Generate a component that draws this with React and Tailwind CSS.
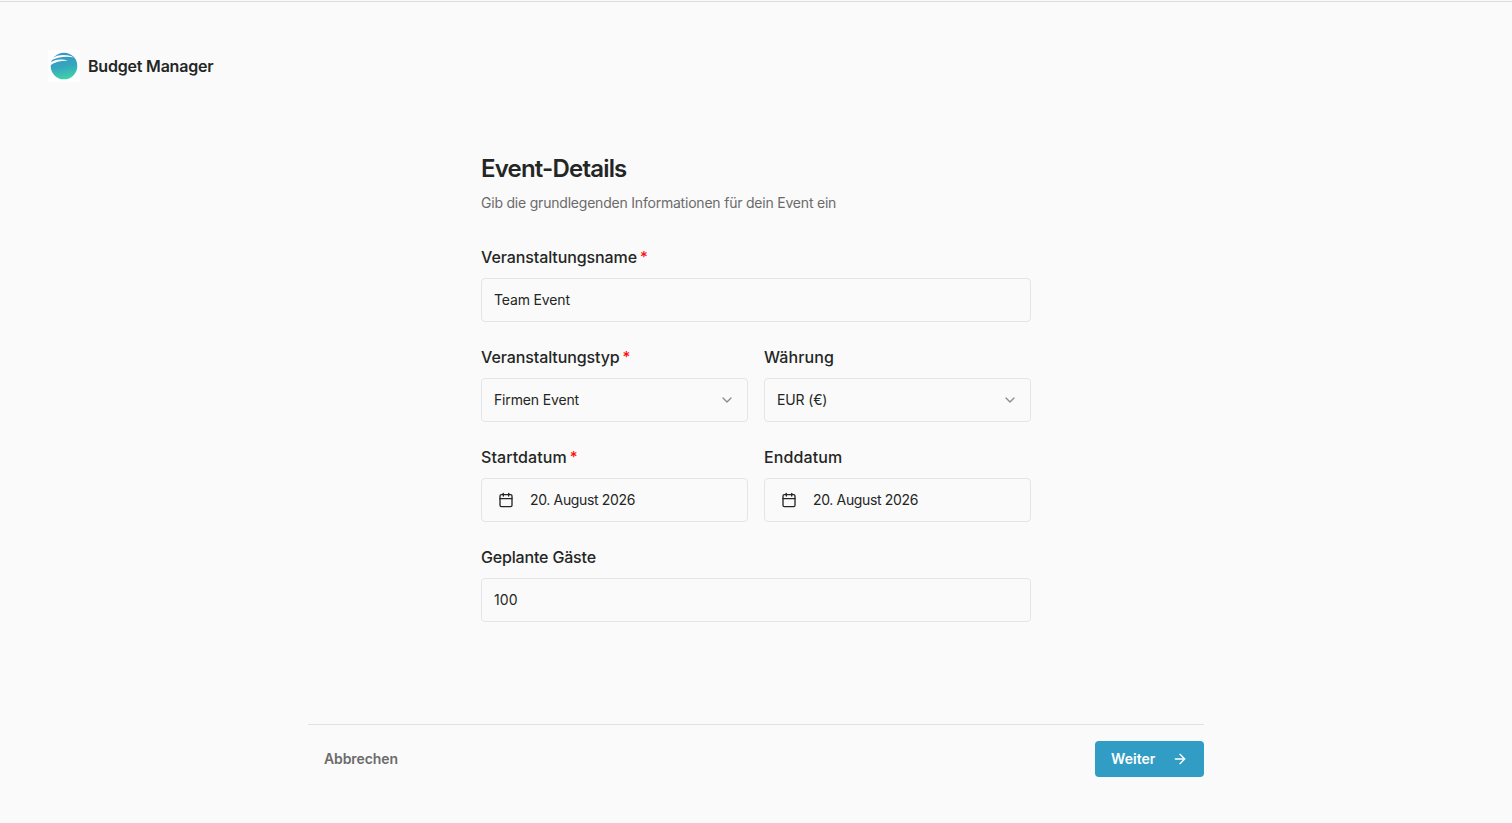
import React from 'react';
import { ArrowRight, Calendar, ChevronDown } from 'lucide-react';

function Logo() {
    return (
        <div className="flex h-8 w-8 items-center justify-center bg-white">
            <svg width="32" height="32" viewBox="0 0 32 32" fill="none">
                <defs>
                    <linearGradient id="globe" x1="13" y1="3" x2="18" y2="30" gradientUnits="userSpaceOnUse">
                        <stop stopColor="#3596c4" />
                        <stop offset="0.5" stopColor="#36a6bd" />
                        <stop offset="1" stopColor="#40d6a8" />
                    </linearGradient>
                </defs>
                <circle cx="16" cy="16" r="13.3" fill="url(#globe)" />
                <path d="M1.5 13.4C6 9.2 13 8.2 20.5 10.9C14.5 10.5 7.5 11.5 2 15.4Z" fill="#fff" />
                <path d="M3.6 8.2C9.5 4.6 18.5 3.5 26 7.4C19 6 10 6.3 2.6 10.6Z" fill="#fff" />
            </svg>
        </div>
    );
}

function Field({ label, required, tracking = 'tracking-[-0.1px]', children }) {
    return (
        <div className="flex flex-1 flex-col">
            <label className={`flex h-6 items-center text-base font-medium whitespace-nowrap ${tracking}`}>
                {label}
                {required && <span className="ml-[3px] text-[15px] text-[#fb0d0d]">*</span>}
            </label>
            <div className="mt-[9px] flex h-11 items-center rounded border border-[#e5e5e5] px-3 text-sm tracking-[-0.15px]">
                {children}
            </div>
        </div>
    );
}

function SelectValue({ children }) {
    return (
        <div className="flex flex-1 items-center justify-between">
            {children}
            <ChevronDown size={16} strokeWidth={2} className="text-[#8c8c8c]" />
        </div>
    );
}

function DateValue({ children }) {
    return (
        <div className="flex items-center gap-4 pl-1">
            <Calendar size={16} strokeWidth={2} />
            <span className="tracking-[-0.35px]">{children}</span>
        </div>
    );
}

export default function App() {
    return (
        <div className="h-[823px] bg-[#fafafa] pt-px font-['Inter',sans-serif] text-[#242625]">
            <div className="flex flex-col border-t border-[#dcdcdc]">
                <header className="flex items-center gap-2 px-12 pt-12">
                    <Logo />
                    <span className="text-base font-semibold tracking-[-0.2px]">Budget Manager</span>
                </header>

                <main className="mx-auto mt-[71px] w-[550px]">
                    <h1 className="text-2xl leading-8 font-semibold tracking-[-0.8px]">Event-Details</h1>
                    <p className="mt-2 text-sm tracking-[-0.21px] text-[#6b6b6b]">
                        Gib die grundlegenden Informationen für dein Event ein
                    </p>

                    <form className="mt-8 flex flex-col gap-[23px]">
                        <Field label="Veranstaltungsname" required>Team Event</Field>
                        <div className="flex gap-4">
                            <Field label="Veranstaltungstyp" required>
                                <SelectValue>Firmen Event</SelectValue>
                            </Field>
                            <Field label="Währung" tracking="tracking-[0.1px]">
                                <SelectValue>EUR (€)</SelectValue>
                            </Field>
                        </div>
                        <div className="flex gap-4">
                            <Field label="Startdatum" required tracking="tracking-[0.08px]">
                                <DateValue>20. August 2026</DateValue>
                            </Field>
                            <Field label="Enddatum" tracking="tracking-[0.12px]">
                                <DateValue>20. August 2026</DateValue>
                            </Field>
                        </div>
                        <Field label="Geplante Gäste" tracking="tracking-[-0.17px]">
                            <span className="tracking-[0.1px]">100</span>
                        </Field>
                    </form>
                </main>

                <footer className="mx-auto mt-[102px] flex w-full max-w-4xl items-center justify-between border-t border-[#e2e2e2] pt-4">
                    <button className="px-4 text-sm font-semibold tracking-[-0.1px] text-[#6b6b6b]">Abbrechen</button>
                    <button className="flex h-9 w-[109px] items-center justify-between rounded bg-[#319cc4] px-4 text-sm font-semibold tracking-[0.05px] text-white">
                        Weiter
                        <ArrowRight size={16} />
                    </button>
                </footer>
            </div>
        </div>
    );
}
